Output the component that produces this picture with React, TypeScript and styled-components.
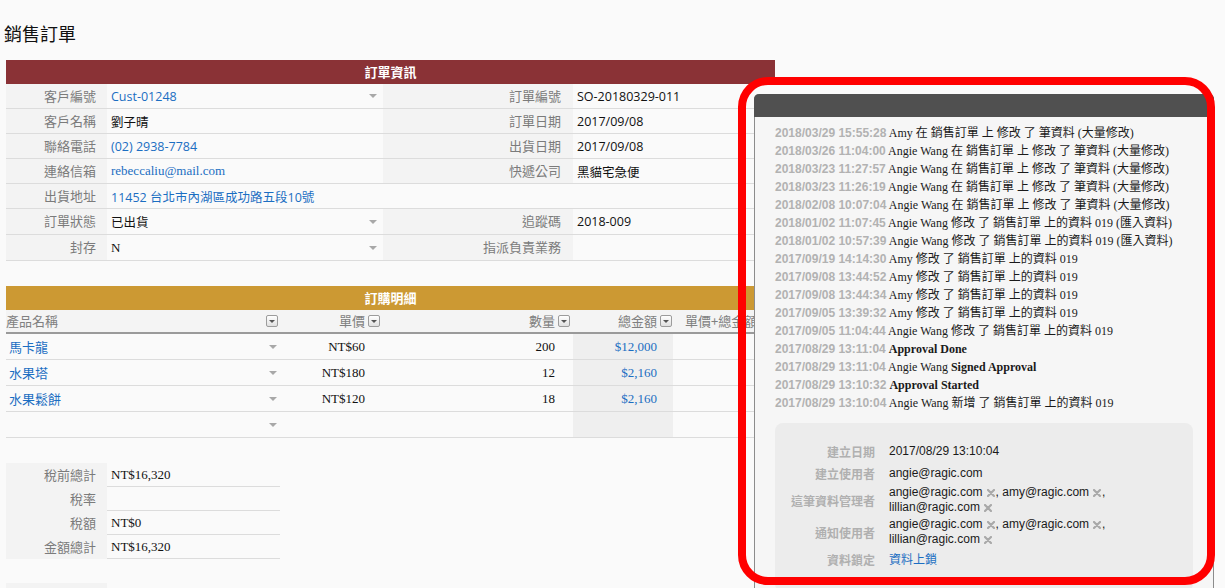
import React from 'react';
import styled, { createGlobalStyle } from 'styled-components';

const CJK = `"Noto Sans CJK TC", sans-serif`;
const SANS = `"Open Sans", "Noto Sans CJK TC", sans-serif`;
const SERIF = `"Liberation Serif", "Noto Sans CJK TC", serif`;
const LINK = '#1b6ec2';

const GlobalStyle = createGlobalStyle`
  html, body { margin: 0; padding: 0; overflow: hidden; background: #fafafa; }
  body { font-family: "Liberation Sans", "Noto Sans CJK TC", sans-serif; color: #111; }
  * { box-sizing: border-box; }
`;

const Page = styled.div`
  position: relative;
  width: 1225px;
  height: 588px;
  padding: 21px 0 0 6px;
`;

const Title = styled.h1`
  margin: 0 0 15px -2px;
  font: 400 18px/24px ${CJK};
  color: #111;
`;

const Section = styled.section<{ $gap?: number; $width?: number }>`
  width: ${p => p.$width ?? 769}px;
  margin-top: ${p => p.$gap ?? 0}px;
`;

const SectionHeader = styled.div<{ $color: string }>`
  height: 24px;
  background: ${p => p.$color};
  color: #fff;
  font: 700 13px/24px ${CJK};
  text-align: center;
`;

const FormRow = styled.div<{ $tall?: boolean }>`
  display: grid;
  grid-template-columns: 101px 276px 190px 202px;
  height: ${p => (p.$tall ? 26 : 25)}px;
  border-bottom: 1px solid #dcdcdc;
`;

const Label = styled.div<{ $pr?: number }>`
  background: #f3f3f3;
  color: #7b7b7b;
  font: 400 13px/24px ${CJK};
  text-align: right;
  padding-right: ${p => p.$pr ?? 11}px;
  white-space: nowrap;
`;

const Value = styled.div<{ $span?: number; $link?: boolean; $serif?: boolean }>`
  grid-column: span ${p => p.$span ?? 1};
  display: flex;
  align-items: center;
  padding: 0 6px 0 4px;
  font-family: ${p => (p.$serif ? SERIF : SANS)};
  font-size: ${p => (p.$serif ? 13 : 12.5)}px;
  color: ${p => (p.$link ? LINK : '#111')};
  white-space: nowrap;
`;

const Caret = styled.span`
  margin-left: auto;
  flex: none;
  width: 0;
  height: 0;
  border-left: 4px solid transparent;
  border-right: 4px solid transparent;
  border-top: 4px solid #a8a8a8;
`;

const COLS = `grid-template-columns: 277px 100px 190px 100px 102px;`;

const HeadRow = styled.div`
  display: grid;
  ${COLS}
  height: 24px;
  background: #f4f4f4;
  border-bottom: 2px solid #9a9a9a;
`;

const HeadCell = styled.div<{ $spread?: boolean; $pl?: number; $pr?: number }>`
  display: flex;
  align-items: center;
  justify-content: ${p => (p.$spread ? 'space-between' : 'flex-end')};
  gap: 3px;
  padding: 0 ${p => p.$pr ?? 0}px 0 ${p => p.$pl ?? 0}px;
  font: 400 13px/22px ${CJK};
  color: #808080;
  white-space: nowrap;
  overflow: hidden;
`;

const HeadOverflow = styled(HeadCell)`
  justify-content: flex-start;
`;

const FilterBtn = styled.span`
  flex: none;
  width: 12px;
  height: 12px;
  border: 1px solid #9c9c9c;
  border-radius: 2px;
  background: linear-gradient(#ffffff, #e0e0e0);
  display: inline-flex;
  align-items: center;
  justify-content: center;
  &::after {
    content: '';
    border-left: 3px solid transparent;
    border-right: 3px solid transparent;
    border-top: 3px solid #555;
  }
`;

const DataRow = styled.div`
  display: grid;
  ${COLS}
  height: 26px;
  border-bottom: 1px solid #dcdcdc;
`;

const Cell = styled.div<{ $spread?: boolean; $pl?: number; $pr?: number; $shade?: boolean; $link?: boolean; $serif?: boolean }>`
  display: flex;
  align-items: center;
  justify-content: ${p => (p.$spread ? 'space-between' : 'flex-end')};
  padding: 0 ${p => p.$pr ?? 0}px 0 ${p => p.$pl ?? 0}px;
  background: ${p => (p.$shade ? '#efefef' : 'transparent')};
  color: ${p => (p.$link ? LINK : '#111')};
  font-family: ${p => (p.$serif ? SERIF : CJK)};
  font-size: 13px;
  white-space: nowrap;
`;

const TotalRow = styled.div`
  display: grid;
  grid-template-columns: 101px 173px;
  height: 24px;
  border-bottom: 1px solid #dcdcdc;
`;

const StubLabel = styled.div`
  width: 101px;
  height: 20px;
  background: #f3f3f3;
`;

const Panel = styled.aside`
  position: absolute;
  left: 754px;
  top: 94px;
  width: 460px;
  height: 520px;
  background: #f6f6f6;
  border: 1px solid #8c8c8c;
  border-top: 0;
  border-radius: 5px 5px 0 0;
`;

const PanelHeader = styled.div`
  height: 23px;
  margin: 0 -1px;
  background: #505050;
  border-radius: 5px 5px 0 0;
`;

const PanelBody = styled.div`
  padding: 7px 19px 0 20px;
`;

const LogList = styled.ul`
  list-style: none;
  margin: 0;
  padding: 0;
`;

const LogItem = styled.li`
  font: 400 12px/18px ${SERIF};
  color: #1a1a1a;
  white-space: nowrap;
`;

const Stamp = styled.span`
  font: 700 12px/18px "Liberation Sans", sans-serif;
  color: #b2b2b2;
`;

const MetaBox = styled.div`
  margin-top: 11px;
  width: 418px;
  background: #ececec;
  border-radius: 8px;
  padding: 17px 0 22px;
`;

const MetaRow = styled.div`
  display: grid;
  grid-template-columns: 100px 1fr;
  column-gap: 14px;
  align-items: center;
  min-height: 22px;
`;

const MetaLabel = styled.div`
  text-align: right;
  font: 700 12px/15px ${CJK};
  color: #b0b0b0;
`;

const MetaValue = styled.div`
  font: 400 12px/15px "Liberation Sans", "Noto Sans CJK TC", sans-serif;
  color: #1a1a1a;
  padding: 1px 0;
`;

const Line = styled.div`
  white-space: nowrap;
`;

const LockLink = styled.a`
  color: ${LINK};
  text-decoration: none;
  font: 400 12px/15px ${CJK};
`;

const RemoveIcon = styled.svg`
  width: 8px;
  height: 8px;
  margin: 0 1px 0 4px;
  vertical-align: -0.5px;
`;

const Highlight = styled.div`
  position: absolute;
  left: 738px;
  top: 77px;
  width: 477px;
  height: 508px;
  border: 8px solid #ff0000;
  border-radius: 30px;
  pointer-events: none;
`;

const Remove = () => (
  <RemoveIcon viewBox="0 0 8 8">
    <path d="M1 1 L7 7 M7 1 L1 7" stroke="#a9a9a9" strokeWidth="2.2" strokeLinecap="round" />
  </RemoveIcon>
);

type Log = { t: string; m: React.ReactNode };
const BULK = ' 在 銷售訂單 上 修改 了 筆資料 (大量修改)';
const logs: Log[] = [
  { t: '2018/03/29 15:55:28', m: <>Amy{BULK}</> },
  { t: '2018/03/26 11:04:00', m: <>Angie Wang{BULK}</> },
  { t: '2018/03/23 11:27:57', m: <>Angie Wang{BULK}</> },
  { t: '2018/03/23 11:26:19', m: <>Angie Wang{BULK}</> },
  { t: '2018/02/08 10:07:04', m: <>Angie Wang{BULK}</> },
  { t: '2018/01/02 11:07:45', m: <>Angie Wang 修改 了 銷售訂單 上的資料 019 (匯入資料)</> },
  { t: '2018/01/02 10:57:39', m: <>Angie Wang 修改 了 銷售訂單 上的資料 019 (匯入資料)</> },
  { t: '2017/09/19 14:14:30', m: <>Amy 修改 了 銷售訂單 上的資料 019</> },
  { t: '2017/09/08 13:44:52', m: <>Amy 修改 了 銷售訂單 上的資料 019</> },
  { t: '2017/09/08 13:44:34', m: <>Amy 修改 了 銷售訂單 上的資料 019</> },
  { t: '2017/09/05 13:39:32', m: <>Amy 修改 了 銷售訂單 上的資料 019</> },
  { t: '2017/09/05 11:04:44', m: <>Angie Wang 修改 了 銷售訂單 上的資料 019</> },
  { t: '2017/08/29 13:11:04', m: <b>Approval Done</b> },
  { t: '2017/08/29 13:11:04', m: <>Angie Wang <b>Signed Approval</b></> },
  { t: '2017/08/29 13:10:32', m: <b>Approval Started</b> },
  { t: '2017/08/29 13:10:04', m: <>Angie Wang 新增 了 銷售訂單 上的資料 019</> },
];

const items = [
  { name: '馬卡龍', price: 'NT$60', qty: '200', total: '$12,000' },
  { name: '水果塔', price: 'NT$180', qty: '12', total: '$2,160' },
  { name: '水果鬆餅', price: 'NT$120', qty: '18', total: '$2,160' },
  { name: '', price: '', qty: '', total: '' },
];

const totals = [
  ['稅前總計', 'NT$16,320'],
  ['稅率', ''],
  ['稅額', 'NT$0'],
  ['金額總計', 'NT$16,320'],
];

export default function App() {
  return (
    <Page>
      <GlobalStyle />
      <Title>銷售訂單</Title>

      <Section>
        <SectionHeader $color="#8a3236">訂單資訊</SectionHeader>
        <FormRow>
          <Label>客戶編號</Label>
          <Value $link>Cust-01248<Caret /></Value>
          <Label $pr={12}>訂單編號</Label>
          <Value>SO-20180329-011</Value>
        </FormRow>
        <FormRow>
          <Label>客戶名稱</Label>
          <Value>劉子晴</Value>
          <Label $pr={12}>訂單日期</Label>
          <Value>2017/09/08</Value>
        </FormRow>
        <FormRow>
          <Label>聯絡電話</Label>
          <Value $link>(02) 2938-7784</Value>
          <Label $pr={12}>出貨日期</Label>
          <Value>2017/09/08</Value>
        </FormRow>
        <FormRow>
          <Label>連絡信箱</Label>
          <Value $link $serif>rebeccaliu@mail.com</Value>
          <Label $pr={12}>快遞公司</Label>
          <Value>黑貓宅急便</Value>
        </FormRow>
        <FormRow>
          <Label>出貨地址</Label>
          <Value $link $span={3}>11452 台北市內湖區成功路五段10號</Value>
        </FormRow>
        <FormRow $tall>
          <Label>訂單狀態</Label>
          <Value>已出貨<Caret /></Value>
          <Label $pr={12}>追蹤碼</Label>
          <Value>2018-009</Value>
        </FormRow>
        <FormRow $tall>
          <Label>封存</Label>
          <Value $serif>N<Caret /></Value>
          <Label $pr={12}>指派負責業務</Label>
          <Value />
        </FormRow>
      </Section>

      <Section $gap={25}>
        <SectionHeader $color="#cc9933">訂購明細</SectionHeader>
        <HeadRow>
          <HeadCell $spread $pr={5}>產品名稱<FilterBtn /></HeadCell>
          <HeadCell $pr={3}>單價<FilterBtn /></HeadCell>
          <HeadCell $pr={3}>數量<FilterBtn /></HeadCell>
          <HeadCell $pr={1}>總金額<FilterBtn /></HeadCell>
          <HeadOverflow $pl={12}>單價+總金額</HeadOverflow>
        </HeadRow>
        {items.map((it, i) => (
          <DataRow key={i}>
            <Cell $spread $pl={3} $pr={6} $link>{it.name}<Caret /></Cell>
            <Cell $pr={18} $serif>{it.price}</Cell>
            <Cell $pr={18} $serif>{it.qty}</Cell>
            <Cell $pr={16} $shade $link $serif>{it.total}</Cell>
            <Cell />
          </DataRow>
        ))}
      </Section>

      <Section $gap={25} $width={274}>
        {totals.map(([k, v]) => (
          <TotalRow key={k}>
            <Label>{k}</Label>
            <Value $serif>{v}</Value>
          </TotalRow>
        ))}
      </Section>

      <Section $gap={24} $width={274}>
        <StubLabel />
      </Section>

      <Panel>
        <PanelHeader />
        <PanelBody>
          <LogList>
            {logs.map((l, i) => (
              <LogItem key={i}>
                <Stamp>{l.t}</Stamp> {l.m}
              </LogItem>
            ))}
          </LogList>
          <MetaBox>
            <MetaRow>
              <MetaLabel>建立日期</MetaLabel>
              <MetaValue>2017/08/29 13:10:04</MetaValue>
            </MetaRow>
            <MetaRow>
              <MetaLabel>建立使用者</MetaLabel>
              <MetaValue>angie@ragic.com</MetaValue>
            </MetaRow>
            <MetaRow>
              <MetaLabel>這筆資料管理者</MetaLabel>
              <MetaValue>
                <Line>angie@ragic.com<Remove />, amy@ragic.com<Remove />,</Line>
                <Line>lillian@ragic.com<Remove /></Line>
              </MetaValue>
            </MetaRow>
            <MetaRow>
              <MetaLabel>通知使用者</MetaLabel>
              <MetaValue>
                <Line>angie@ragic.com<Remove />, amy@ragic.com<Remove />,</Line>
                <Line>lillian@ragic.com<Remove /></Line>
              </MetaValue>
            </MetaRow>
            <MetaRow>
              <MetaLabel>資料鎖定</MetaLabel>
              <MetaValue><LockLink href="#">資料上鎖</LockLink></MetaValue>
            </MetaRow>
          </MetaBox>
        </PanelBody>
      </Panel>

      <Highlight />
    </Page>
  );
}
